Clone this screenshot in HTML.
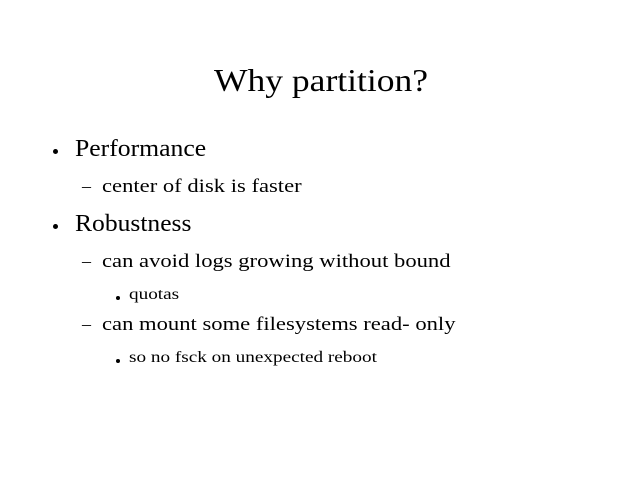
<!DOCTYPE html>
<html><head><style>
body{margin:0;width:640px;height:480px;background:#fff;font-family:"Liberation Serif",serif;color:#000;position:relative;overflow:hidden}
div{position:absolute;white-space:nowrap;transform-origin:0 0}
.s{transform:scaleX(1.19)}
.ss{transform:scaleX(1.2)}
.b{width:5px;height:5px;border-radius:50%;background:#000}
.sb{width:4px;height:4px;border-radius:50%;background:#000}
</style></head><body>
<div style="left:214px;top:62px;font-size:32px;transform:scaleX(1.11)">Why partition?</div>
<div class="b" style="left:53px;top:149px"></div>
<div style="left:75px;top:136px;font-size:24px;transform:scaleX(1.07)">Performance</div>
<div style="left:82px;top:176px;font-size:18px">–</div>
<div class="s" style="left:102px;top:176px;font-size:19px">center of disk is faster</div>
<div class="b" style="left:53px;top:224px"></div>
<div style="left:75px;top:211px;font-size:24px;transform:scaleX(1.065)">Robustness</div>
<div style="left:82px;top:251px;font-size:18px">–</div>
<div class="s" style="left:102px;top:251px;font-size:19px">can avoid logs growing without bound</div>
<div class="sb" style="left:116px;top:296px"></div>
<div class="ss" style="left:129px;top:286px;font-size:16px">quotas</div>
<div style="left:82px;top:314px;font-size:18px">–</div>
<div class="s" style="left:102px;top:314px;font-size:19px">can mount some filesystems read- only</div>
<div class="sb" style="left:116px;top:359px"></div>
<div class="ss" style="left:129px;top:349px;font-size:16px">so no fsck on unexpected reboot</div>
</body></html>
